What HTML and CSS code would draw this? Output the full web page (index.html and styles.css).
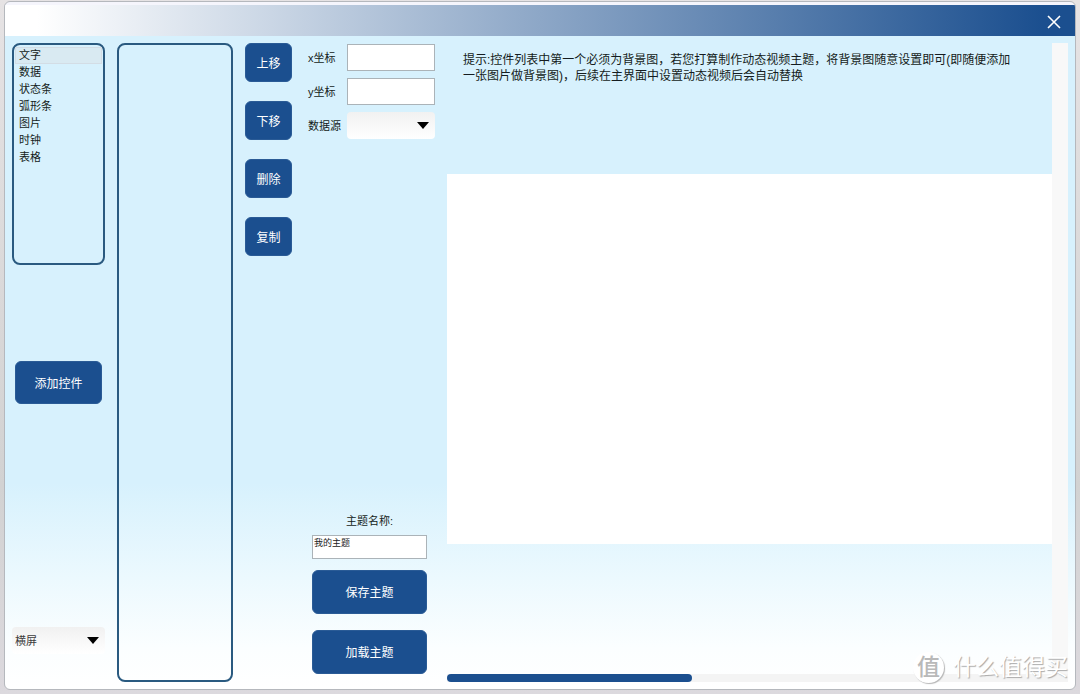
FILE: index.html
```html
<!DOCTYPE html>
<html lang="zh-CN">
<head>
<meta charset="utf-8">
<title>主题编辑</title>
<link rel="stylesheet" href="styles.css">
</head>
<body>
<div class="window">
  <header class="titlebar">
    <button class="close" type="button" aria-label="关闭">
      <svg width="14" height="14" viewBox="0 0 14 14"><path d="M1 1L13 13M13 1L1 13" fill="none" stroke="#fff" stroke-width="1.6"/></svg>
    </button>
  </header>
  <main class="content">
    <section class="types">
      <ul class="list">
        <li class="item selected">文字</li>
        <li class="item">数据</li>
        <li class="item">状态条</li>
        <li class="item">弧形条</li>
        <li class="item">图片</li>
        <li class="item">时钟</li>
        <li class="item">表格</li>
      </ul>
      <button class="btn btn-add" type="button">添加控件</button>
      <div class="select-wrap">
        <select class="select" aria-label="屏幕方向"><option>横屏</option></select>
        <svg class="arrow" width="12" height="7" viewBox="0 0 12 7"><path d="M0 0H12L6 7Z"/></svg>
      </div>
    </section>
    <section class="layers" aria-label="控件列表"></section>
    <section class="actions">
      <button class="btn btn-small" type="button">上移</button>
      <button class="btn btn-small" type="button">下移</button>
      <button class="btn btn-small" type="button">删除</button>
      <button class="btn btn-small" type="button">复制</button>
    </section>
    <section class="props">
      <div class="fields">
        <label class="label" for="pos-x">x坐标</label>
        <input class="input" id="pos-x" type="text">
        <label class="label" for="pos-y">y坐标</label>
        <input class="input" id="pos-y" type="text">
        <label class="label" for="source">数据源</label>
        <div class="select-wrap">
          <select class="select" id="source"><option></option></select>
          <svg class="arrow" width="12" height="7" viewBox="0 0 12 7"><path d="M0 0H12L6 7Z"/></svg>
        </div>
      </div>
      <div class="theme">
        <label class="theme-label" for="theme-name">主题名称:</label>
        <input class="input theme-name" id="theme-name" type="text" value="我的主题">
        <button class="btn btn-theme" type="button">保存主题</button>
        <button class="btn btn-theme" type="button">加载主题</button>
      </div>
    </section>
    <section class="preview">
      <div class="stage">
        <p class="hint">提示:控件列表中第一个必须为背景图，若您打算制作动态视频主题，将背景图随意设置即可(即随便添加<br>一张图片做背景图)，后续在主界面中设置动态视频后会自动替换</p>
        <div class="canvas"></div>
      </div>
      <div class="vbar"></div>
      <div class="hbar"><div class="thumb"></div></div>
    </section>
  </main>
  <div class="watermark">
    <span class="seal">值</span>
    <span class="brand">什么值得买</span>
  </div>
</div>
</body>
</html>
```
FILE: styles.css
```css
* {
  box-sizing: border-box;
}

body {
  margin: 0;
  min-height: 100vh;
  display: flex;
  padding: 1px 4px 4px;
  background: linear-gradient(#e6e3e4, #d2d2d2 70%, #dcd9de);
  font-family: "Liberation Sans", "Noto Sans CJK SC", sans-serif;
  color: #141c20;
}

button,
input,
select {
  font-family: inherit;
  margin: 0;
}

.window {
  position: relative;
  flex: 1;
  display: flex;
  flex-direction: column;
  padding-top: 3px;
  border: 1px solid #b5b8bd;
  border-radius: 6px;
  overflow: hidden;
  background: linear-gradient(#f5f5fc 4px, #d7f1fd 4px, #d7f1fd 70%, #ecf9fe 84%, #fbfeff 94%, #fff);
}

.titlebar {
  height: 31px;
  display: flex;
  align-items: center;
  justify-content: flex-end;
  padding: 2px 14px 0;
  background: linear-gradient(90deg, #fff 3%, #1b4f8f 97%);
}

.close {
  display: flex;
  padding: 0;
  border: 0;
  background: none;
}

.content {
  flex: 1;
  display: grid;
  grid-template-columns: 93px 116px 47px 131px 1fr;
  column-gap: 12px;
  padding: 7px;
}

.types {
  display: flex;
  flex-direction: column;
}

.list {
  height: 222px;
  margin: 0 0 96px;
  padding: 2px 1px;
  list-style: none;
  border: 2px solid #2a5a80;
  border-radius: 8px;
}

.item {
  height: 17px;
  padding: 0 3px;
  border: 1px solid transparent;
  font-size: 11px;
  line-height: 15px;
}

.selected {
  background: #d9eaf2;
  border-color: #d3dde5;
}

.btn {
  padding: 2px 0 0;
  border: 1px solid #2a5b96;
  border-radius: 6px;
  background: #1b4f8f;
  color: #fff;
  font-size: 12px;
  line-height: 18px;
}

.btn-add {
  height: 43px;
  margin: 0 3px;
}

.select-wrap {
  position: relative;
  display: flex;
}

.types .select-wrap {
  margin: auto 0 28px;
}

.select {
  appearance: none;
  width: 100%;
  height: 27px;
  padding: 0 3px;
  border: 0;
  border-radius: 4px;
  background: linear-gradient(#f1f1f1, #fff);
  color: #3c3c3c;
  font-size: 11px;
}

.arrow {
  position: absolute;
  right: 6px;
  top: 10px;
  pointer-events: none;
}

.layers {
  border: 2px solid #2a5a80;
  border-radius: 8px;
}

.actions {
  display: flex;
  flex-direction: column;
  gap: 19px;
}

.btn-small {
  height: 39px;
}

.props {
  display: flex;
  flex-direction: column;
  justify-content: space-between;
  padding-left: 4px;
}

.fields {
  display: grid;
  grid-template-columns: 39px 1fr;
  row-gap: 7px;
  align-items: center;
  padding-top: 1px;
}

.label,
.theme-label {
  padding-top: 1px;
  font-size: 11px;
  line-height: 16px;
}

.input {
  width: 100%;
  height: 27px;
  padding: 0 2px;
  border: 1px solid #abb3b8;
  background: #fff;
  color: #222;
  font-size: 11px;
}

.theme {
  display: flex;
  flex-direction: column;
  padding: 0 8px 8px 4px;
}

.theme-label {
  text-align: center;
}

.theme-name {
  height: 24px;
  margin: 6px 0 11px;
  padding: 0 1px 9px;
  font-size: 9px;
}

.btn-theme {
  height: 44px;
}

.btn-theme + .btn-theme {
  margin-top: 16px;
}

.preview {
  display: grid;
  grid-template-columns: 1fr 16px;
  grid-template-rows: 1fr 8px;
}

.stage {
  display: flex;
  flex-direction: column;
}

.hint {
  height: 131px;
  margin: 0;
  padding: 9px 0 0 16px;
  font-size: 12px;
  line-height: 16px;
  white-space: nowrap;
}

.canvas {
  height: 370px;
  background: #fff;
}

.vbar {
  background: #f8f8f8;
}

.hbar {
  grid-column: 1 / 3;
  background: #f4f4f4;
}

.thumb {
  width: 245px;
  height: 8px;
  border-radius: 4px;
  background: #1b4f8f;
}

.watermark {
  position: absolute;
  right: 7px;
  bottom: 6px;
  display: flex;
  align-items: center;
  gap: 9px;
  color: #fff;
}

.seal {
  width: 31px;
  height: 31px;
  border-radius: 50%;
  background: #fff;
  box-shadow: 1px 1px 1px #b5b5b5;
  color: #b9b9b9;
  font-size: 23px;
  font-weight: 500;
  line-height: 30px;
  text-align: center;
}

.brand {
  font-size: 23px;
  line-height: 32px;
  text-shadow: 1px 1px 1px #a8a8a8;
}
```
